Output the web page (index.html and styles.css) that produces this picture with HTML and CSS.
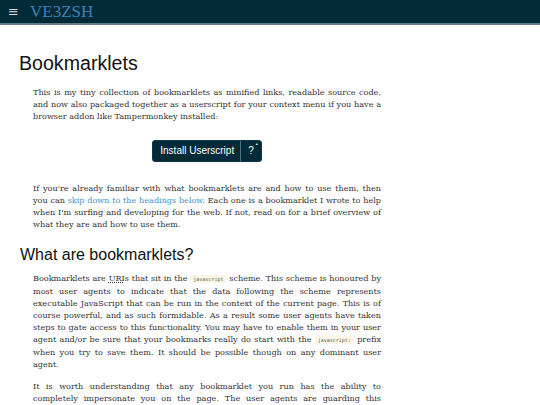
FILE: index.html
```html
<!DOCTYPE html>
<html>
<head>
<meta charset="utf-8">
<link rel="stylesheet" href="styles.css">
</head>
<body>
<header class="navbar">
  <span class="burger">&#8801;</span>
  <span class="brand">VE3ZSH</span>
</header>
<main class="content">
  <h1 class="title">Bookmarklets</h1>
  <p class="text">This is my tiny collection of bookmarklets as minified links, readable source code, and now also packaged together as a userscript for your context menu if you have a browser addon like Tampermonkey installed:</p>
  <div class="actions">
    <div class="btn-group">
      <span class="btn">Install Userscript</span>
      <span class="btn btn-help">?<span class="dot">&#8226;</span></span>
    </div>
  </div>
  <p class="text">If you're already familiar with what bookmarklets are and how to use them, then you can <a class="link" href="#">skip down to the headings below</a>. Each one is a bookmarklet I wrote to help when I'm surfing and developing for the web. If not, read on for a brief overview of what they are and how to use them.</p>
  <h2 class="subtitle">What are bookmarklets?</h2>
  <p class="text">Bookmarklets are <abbr class="abbr">URI</abbr>s that sit in the <code class="code">javascript</code> scheme. This scheme is honoured by most user agents to indicate that the data following the scheme represents executable JavaScript that can be run in the context of the current page. This is of course powerful, and as such formidable. As a result some user agents have taken steps to gate access to this functionality. You may have to enable them in your user agent and/or be sure that your bookmarks really do start with the <code class="code">javascript:</code> prefix when you try to save them. It should be possible though on any dominant user agent.</p>
  <p class="text">It is worth understanding that any bookmarklet you run has the ability to completely impersonate you on the page. The user agents are guarding this functionality for good reason, so only run bookmarklets you trust.</p>
</main>
</body>
</html>
```
FILE: styles.css
```css
html, body {
  margin: 0;
  padding: 0;
  background: #ffffff;
}
body {
  font-family: "DejaVu Serif", serif;
  color: #333333;
}
.navbar {
  height: 23px;
  background: #032a37;
  border-bottom: 2px solid #5f7f88;
  display: flex;
  align-items: center;
  padding-left: 8px;
}
.burger {
  font-family: "DejaVu Sans", sans-serif;
  color: #d8dde0;
  font-size: 13px;
  width: 22px;
}
.brand {
  font-family: "Liberation Serif", serif;
  color: #3b82b6;
  font-size: 17px;
}
.content {
  padding: 0 19px;
}
.title {
  font-family: "Liberation Sans", Arial, sans-serif;
  font-weight: normal;
  font-size: 19.6px;
  color: #111111;
  margin: 27px 0 11px 0;
}
.subtitle {
  font-family: "Liberation Sans", Arial, sans-serif;
  font-weight: normal;
  font-size: 16px;
  color: #111111;
  margin: 16px 0 8px 1px;
}
.text {
  width: 348px;
  margin: 0 0 10px 14px;
  font-size: 8.1px;
  line-height: 12px;
  text-align: justify;
}
.link {
  color: #3d94d1;
  text-decoration: none;
}
.abbr {
  text-decoration: underline dotted;
}
.code {
  font-family: "DejaVu Sans Mono", monospace;
  font-size: 5px;
  background: #fbf5e6;
  border-radius: 2px;
  padding: 1px 3px;
  color: #555;
}
.actions {
  width: 348px;
  margin: 18px 0 20px 14px;
  display: flex;
  justify-content: center;
}
.btn-group {
  display: flex;
  background: #032a37;
  border-radius: 3px;
  border: 1px solid #0c3a4a;
}
.btn {
  font-family: "Liberation Sans", Arial, sans-serif;
  color: #ffffff;
  font-size: 10px;
  padding: 5px 6px 5px 7px;
  line-height: 10px;
}
.btn-help {
  border-left: 1px solid #55707a;
  position: relative;
  padding: 5px 7px 5px 7px;
}
.dot {
  position: absolute;
  top: 0px;
  right: 3px;
  font-size: 6px;
  line-height: 6px;
}
```
